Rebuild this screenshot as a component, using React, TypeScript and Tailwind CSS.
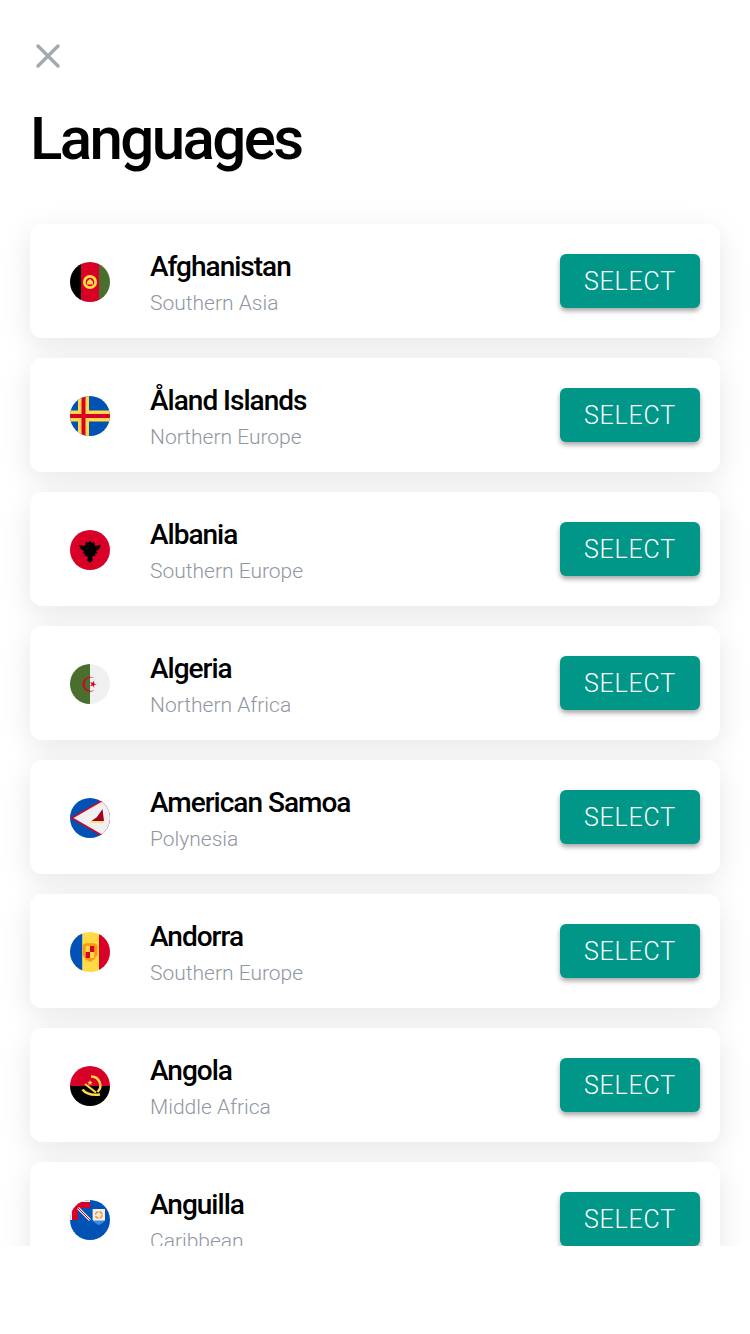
import { ReactNode } from "react";
import { X } from "lucide-react";

const Flag = ({ children }: { children: ReactNode }) => (
  <svg viewBox="0 0 40 40" className="w-10 h-10 mt-0.5 rounded-full shrink-0">
    {children}
  </svg>
);

const Afghanistan = () => (
  <Flag>
    <rect width="11" height="40" fill="#000" />
    <rect x="11" width="18" height="40" fill="#d80027" />
    <rect x="29" width="11" height="40" fill="#496e2d" />
    <circle cx="20" cy="20" r="5.7" fill="none" stroke="#ffda44" strokeWidth="2.8" />
    <path d="M17 22.500v-3l3-2.800 3 2.800v3z" fill="#ffda44" />
  </Flag>
);

const Aland = () => (
  <Flag>
    <rect width="40" height="40" fill="#0052b4" />
    <rect x="8" width="11" height="40" fill="#ffda44" />
    <rect y="14.500" width="40" height="11" fill="#ffda44" />
    <rect x="11.500" width="4" height="40" fill="#d80027" />
    <rect y="18" width="40" height="4" fill="#d80027" />
  </Flag>
);

const Albania = () => (
  <Flag>
    <rect width="40" height="40" fill="#d80027" />
    <path
      d="M9 15L15 16L16 11.500L18 13L20 10.500L22 13L24 11.500L25 16L31 15L29 19L26 21L27.500 23L25 24L25.500 26L23 26L22 28L23 30L20 33L17 30L18 28L17 26L14.500 26L15 24L12.500 23L14 21L11 19Z"
      fill="#000"
    />
  </Flag>
);

const Algeria = () => (
  <Flag>
    <rect width="20" height="40" fill="#496e2d" />
    <rect x="20" width="20" height="40" fill="#f0f0f0" />
    <path d="M25 14.600A7.500 7.500 0 1 0 25 25.800A6.700 6.700 0 1 1 25 14.600z" fill="#d80027" />
    <path
      d="M26.800 20.200L24.100 21L24.200 23.800L22.600 21.600L19.900 22.400L21.600 20.200L19.900 18L22.600 18.800L24.200 16.600L24.100 19.400z"
      fill="#d80027"
    />
  </Flag>
);

const AmericanSamoa = () => (
  <Flag>
    <rect width="40" height="40" fill="#0052b4" />
    <path d="M0.500 20L40 -3V43z" fill="#d80027" />
    <path d="M3.500 20L40 -1V41z" fill="#f0f0f0" />
    <path d="M21.500 23l5.500-4 5.500-8 1.500 12z" fill="#a2001d" />
    <rect x="20.500" y="23.300" width="13" height="1.400" fill="#ffda44" />
  </Flag>
);

const Andorra = () => (
  <Flag>
    <rect width="12.500" height="40" fill="#0052b4" />
    <rect x="12.500" width="16.500" height="40" fill="#ffda44" />
    <rect x="29" width="11" height="40" fill="#d80027" />
    <path d="M12.700 13l3-1.700h8.600l3 1.700v10l-3 4.500-4.300 2.500-4.300-2.500-3-4.500z" fill="#ff9811" />
    <rect x="15.700" y="14" width="8.600" height="12" rx="1" fill="#ffda44" />
    <rect x="20" y="14" width="4.300" height="6" fill="#d80027" />
    <rect x="15.700" y="20" width="4.300" height="6" fill="#d80027" />
  </Flag>
);

const Angola = () => (
  <Flag>
    <rect width="40" height="20" fill="#d80027" />
    <rect y="20" width="40" height="20" fill="#000" />
    <path d="M21 10.500A9 9 0 0 1 27.500 26" fill="none" stroke="#ffda44" strokeWidth="2.400" />
    <path d="M12.500 23.500C16 28 22 29.500 30 28.500" fill="none" stroke="#ffda44" strokeWidth="2.600" />
    <path d="M15 18L26 26.500" stroke="#ffda44" strokeWidth="2.200" />
    <path d="M20 14l.7 1.800 2 .1-1.500 1.200.5 1.900-1.700-1.100-1.700 1.100.5-1.900-1.500-1.200 2-.1z" fill="#ffda44" />
  </Flag>
);

const Anguilla = () => (
  <Flag>
    <rect width="40" height="40" fill="#0052b4" />
    <rect width="20" height="20" fill="#f0f0f0" />
    <rect x="2" y="2" width="18" height="18" fill="#d80027" />
    <rect x="8" y="8" width="12" height="12" fill="#0052b4" />
    <path d="M8 8l12 12" stroke="#f0f0f0" strokeWidth="2.600" />
    <path d="M8 8l12 12" stroke="#d80027" strokeWidth="1" />
    <path d="M22.700 9h12.300v9.500c0 3-2.500 5-6.200 6.500-3.600-1.500-6.100-3.500-6.100-6.500z" fill="#3d8be0" />
    <path d="M22.700 9h12.300v11.500h-12.300z" fill="#f0f0f0" />
    <circle cx="28.800" cy="15" r="3.300" fill="none" stroke="#ff9811" strokeWidth="1.500" strokeDasharray="4 1.200" />
  </Flag>
);

const items = [
  { name: "Afghanistan", region: "Southern Asia", flag: <Afghanistan /> },
  { name: "Åland Islands", region: "Northern Europe", flag: <Aland /> },
  { name: "Albania", region: "Southern Europe", flag: <Albania /> },
  { name: "Algeria", region: "Northern Africa", flag: <Algeria /> },
  { name: "American Samoa", region: "Polynesia", flag: <AmericanSamoa /> },
  { name: "Andorra", region: "Southern Europe", flag: <Andorra /> },
  { name: "Angola", region: "Middle Africa", flag: <Angola /> },
  { name: "Anguilla", region: "Caribbean", flag: <Anguilla /> },
];

const App = () => {
  return (
    <main className="w-[750px] h-[1334px] bg-white font-['Roboto',sans-serif]">
      <div className="px-[30px] pt-9">
        <X className="w-10 h-10 -ml-0.5 text-[#a0aab3]" strokeWidth={2} />
        <h1 className="mt-[23px] text-[60px] leading-[80px] font-medium text-black tracking-[-2.6px]">
          Languages
        </h1>
      </div>

      <div className="mt-[15px] h-[1052px] overflow-hidden px-[30px] pt-[30px] flex flex-col gap-5">
        {items.map((item) => (
          <div
            key={item.name}
            className="shrink-0 h-[114px] flex items-center pl-10 pr-5 bg-white rounded-xl shadow-[0_8px_30px_rgba(17,24,39,0.1)]"
          >
            {item.flag}
            <div className="ml-10 flex-1 pt-2">
              <p className="text-[28px] leading-9 font-medium text-black tracking-[-1px]">
                {item.name}
              </p>
              <p className="text-[21px] leading-9 font-light text-[#8f97a3]">
                {item.region}
              </p>
            </div>
            <button
              type="button"
              className="w-[140px] h-[54px] pt-0.5 rounded-md bg-[#009688] text-white text-[25px] font-light tracking-[0.8px] shadow-[0_3px_5px_rgba(0,0,0,0.35)]"
            >
              SELECT
            </button>
          </div>
        ))}
      </div>
    </main>
  );
};

export default App;
